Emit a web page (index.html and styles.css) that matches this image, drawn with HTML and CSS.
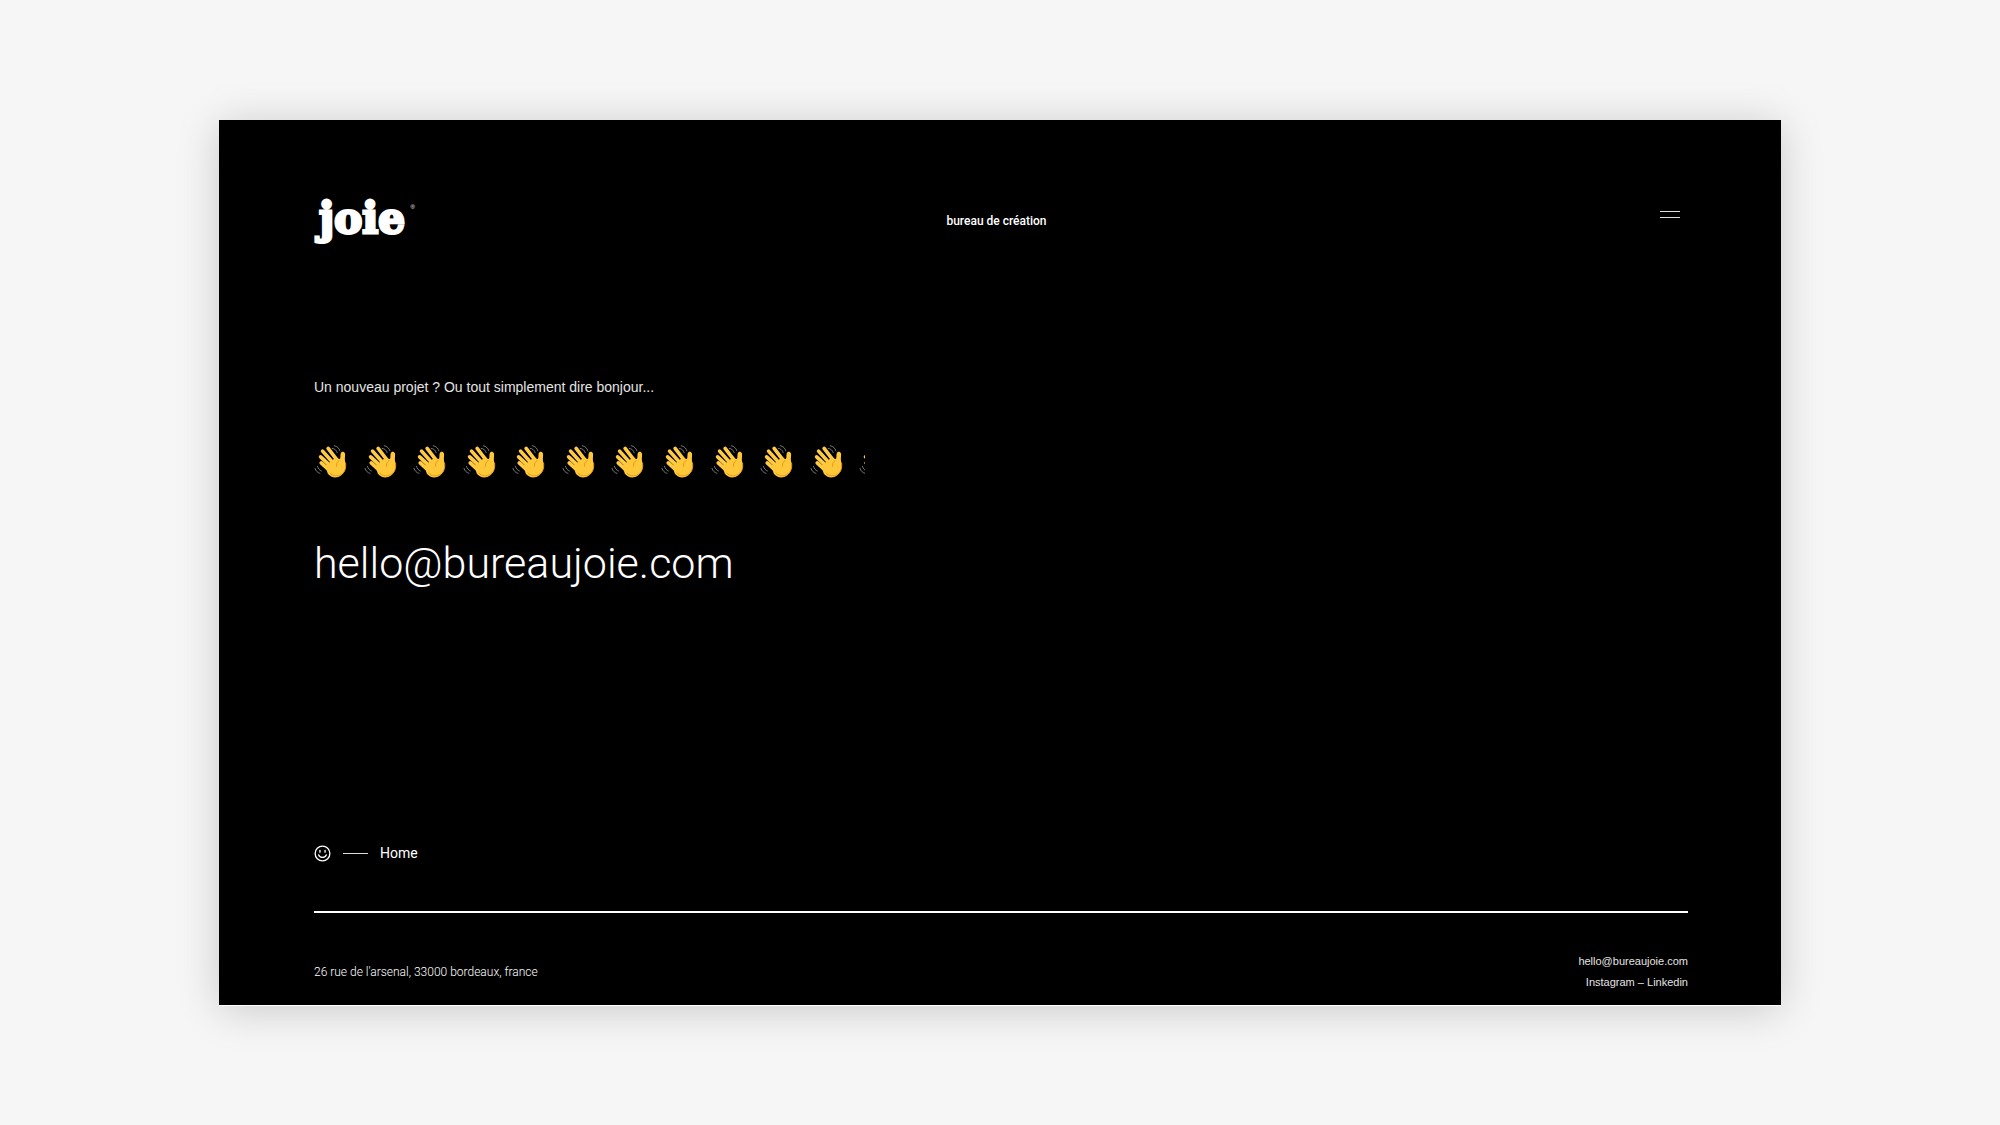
FILE: index.html
```html
<!DOCTYPE html>
<html lang="fr">
<head>
<meta charset="utf-8">
<meta name="viewport" content="width=device-width, initial-scale=1">
<title>joie – bureau de création</title>
<link rel="stylesheet" href="styles.css">
</head>
<body>
<svg class="sprite" aria-hidden="true">
  <symbol id="wave" viewBox="0 0 34 34">
    <g fill="none" stroke="#777" stroke-width="1" stroke-linecap="round">
      <path d="M18.500 4.200c2.600.3 4.300 2 5 4.400M20.500 1.500c3 .6 5 2.500 5.700 5.200M1 24.500c.8 2.600 2.500 4.200 5 5M3.500 22.500c.6 2.200 2 3.800 4 4.600"/>
    </g>
    <g fill="none" stroke="#ffcb45" stroke-width="3.700" stroke-linecap="round">
      <path d="M14.300 4.300 23 15.500M8.700 7 19 18.500M6.700 12.800 16 21.500M7.300 19 14.500 25.500"/>
    </g>
    <path fill="#ffc83a" d="M11.500 22 22.800 12.600c1.200 1.700 2.600 2.700 3.400 2.100.9-.7.300-3.200.8-5.400.5-2.300 3.600-2.400 4.300-.2.600 2-.5 5 .2 8.500 1.100 5.700.5 10.400-3.800 13.800-4.800 3.700-10.200 2.600-13.700-1.500z"/>
    <path fill="none" stroke="#e89a16" stroke-width="1" stroke-linecap="round" d="M32 19c.6 5.500-.7 9-4.300 11.400-4 2.600-8.500 2-11.500-.9M25.500 16.500c-2.500 1.600-3.200 3.800-2.600 6"/>
  </symbol>
</svg>
<main class="card">
  <header class="top">
    <a class="logo" href="#">joie<sup class="logo-mark">®</sup></a>
    <p class="tagline">bureau de création</p>
    <div class="menu">
      <button class="menu-button" type="button" aria-label="Menu"><span class="bar"></span><span class="bar"></span></button>
    </div>
  </header>
  <section class="contact">
    <p class="intro">Un nouveau projet ? Ou tout simplement dire bonjour...</p>
    <div class="waves" aria-hidden="true">
      <svg class="wave"><use href="#wave"/></svg><svg class="wave"><use href="#wave"/></svg><svg class="wave"><use href="#wave"/></svg><svg class="wave"><use href="#wave"/></svg><svg class="wave"><use href="#wave"/></svg><svg class="wave"><use href="#wave"/></svg><svg class="wave"><use href="#wave"/></svg><svg class="wave"><use href="#wave"/></svg><svg class="wave"><use href="#wave"/></svg><svg class="wave"><use href="#wave"/></svg><svg class="wave"><use href="#wave"/></svg><svg class="wave"><use href="#wave"/></svg>
    </div>
    <a class="email" href="mailto:hello@bureaujoie.com">hello@bureaujoie.com</a>
  </section>
  <nav class="crumbs">
    <svg class="smiley" viewBox="0 0 18 18" aria-hidden="true">
      <circle cx="9" cy="9" r="7.800" fill="none" stroke="#fff" stroke-width="1.400"/>
      <path d="M5 10.500c1.400 3.400 6.600 3.400 8 0M6.300 5.600v2M11.700 5.600v2" fill="none" stroke="#fff" stroke-width="1.400" stroke-linecap="round"/>
    </svg>
    <span class="dash"></span>
    <a class="home" href="#">Home</a>
  </nav>
  <footer class="bottom">
    <address class="address">26 rue de l'arsenal, 33000 bordeaux, france</address>
    <div class="links">
      <a href="mailto:hello@bureaujoie.com">hello@bureaujoie.com</a>
      <p><a href="#">Instagram</a> – <a href="#">Linkedin</a></p>
    </div>
  </footer>
</main>
</body>
</html>
```
FILE: styles.css
```css
* { box-sizing: border-box; }
body {
  margin: 0;
  padding: 120px 219px;
  background: #f6f6f6;
  font-family: "Liberation Sans", Arial, sans-serif;
  color: #fff;
}
p { margin: 0; }
a { color: inherit; text-decoration: none; }
.sprite { display: none; }
.card {
  display: flex;
  flex-direction: column;
  padding: 80px 93px 12px 95px;
  background: #000;
  border-bottom: 1px solid #fff;
  box-shadow: 0 4px 40px rgba(0, 0, 0, 0.18);
}
.top {
  display: flex;
  justify-content: space-between;
  align-items: flex-start;
}
.logo {
  position: relative;
  width: 101px;
  padding-left: 5px;
  font: bold 42px/38px "DejaVu Serif", serif;
  -webkit-text-stroke: 3px #fff;
}
.logo-mark {
  position: absolute;
  top: 4px;
  right: 0;
  font: 6px/6px "Liberation Sans", sans-serif;
  -webkit-text-stroke: 0;
}
.tagline { padding-top: 12px; font: 500 12px/18px Roboto, sans-serif; }
.menu { display: flex; justify-content: flex-end; width: 110px; }
.menu-button {
  display: flex;
  flex-direction: column;
  gap: 5px;
  padding: 11px 8px;
  border: 0;
  background: none;
}
.bar { width: 20px; height: 1px; background: #ddd; }
.contact { display: flex; flex-direction: column; align-items: flex-start; padding-top: 138px; }
.intro { font-size: 14px; line-height: 22px; color: #e4e4e4; }
.waves { display: flex; width: 551px; max-width: 100%; margin-top: 46px; overflow: hidden; }
.wave { flex: 0 0 9%; height: 34px; padding-right: 16px; }
.email { margin-top: 55px; font: 300 43px/60px Roboto, sans-serif; }
.crumbs { display: flex; align-items: center; gap: 12px; margin-top: 251px; height: 18px; }
.smiley { width: 17px; height: 17px; }
.dash { width: 25px; height: 1px; background: #ddd; }
.home { font: 14px/18px Roboto, sans-serif; }
.bottom {
  display: flex;
  justify-content: space-between;
  align-items: center;
  margin-top: 49px;
  padding-top: 38px;
  border-top: 2px solid #fff;
  font-size: 11px;
  line-height: 21px;
  color: #e4e4e4;
}
.address { font: 300 12px/21px Roboto, sans-serif; color: #fff; }
.links { text-align: right; }
.links > a { display: block; }
```
